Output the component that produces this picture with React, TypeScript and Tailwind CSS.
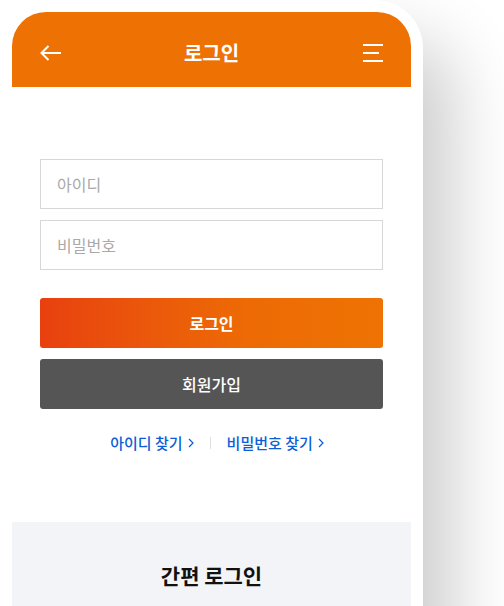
import React from "react";

const font = { fontFamily: '"Noto Sans CJK KR", "Noto Sans", sans-serif' };

function Chevron() {
  return (
    <svg width="6" height="10" viewBox="0 0 6 10" fill="none" className="ml-[5px]">
      <path d="M1 1l4 4-4 4" stroke="currentColor" strokeWidth="1.2" />
    </svg>
  );
}

export default function App() {
  return (
    <div className="h-[606px] bg-white overflow-hidden" style={font}>
      <div className="w-[423px] h-[680px] bg-white rounded-tr-[48px] pt-3 px-3 shadow-[30px_40px_70px_rgba(0,0,0,0.2)]">
        <header className="relative flex h-[75px] items-center justify-between rounded-t-[34px] bg-[#ed7103] px-7 pt-[6px]">
          <svg width="22" height="16" viewBox="0 0 22 16" fill="none">
            <path d="M21 8H1.5M8.5 1L1.5 8l7 7" stroke="white" strokeWidth="2" />
          </svg>
          <h1 className="absolute inset-x-0 top-[6px] bottom-0 flex items-center justify-center text-[20px] font-bold text-white">
            로그인
          </h1>
          <svg width="20" height="18" viewBox="0 0 20 18" fill="none">
            <path d="M0 1h20M0 9h16M0 17h20" stroke="white" strokeWidth="2" />
          </svg>
        </header>

        <div className="flex flex-col px-7 pt-[72px]">
          <input
            placeholder="아이디"
            className="h-[50px] w-full border border-[#d7d7d7] px-4 text-[16px] placeholder:text-[#a9a9a9] outline-none"
          />
          <input
            type="password"
            placeholder="비밀번호"
            className="mt-[11px] h-[50px] w-full border border-[#d7d7d7] px-4 text-[16px] placeholder:text-[#a9a9a9] outline-none"
          />
          <button className="mt-[28px] h-[50px] w-full rounded-[3px] bg-gradient-to-r from-[#e8400f] via-[#ed6a05] via-60% to-[#ee7303] text-[16px] font-bold text-white">
            로그인
          </button>
          <button className="mt-[11px] h-[50px] w-full rounded-[3px] bg-[#555555] text-[16px] font-medium text-white">
            회원가입
          </button>
          <div className="mt-[23px] flex items-center justify-center pl-[11px] text-[15px] font-medium text-[#0b5ed8]">
            <a className="flex items-center">
              아이디 찾기
              <Chevron />
            </a>
            <span className="mx-4 h-3 w-px bg-[#dedede]" />
            <a className="flex items-center">
              비밀번호 찾기
              <Chevron />
            </a>
          </div>
        </div>

        <section className="mt-[67px] bg-[#f3f4f8] pt-[38px] pb-10">
          <h2 className="text-center text-[21px] font-bold text-[#111]">간편 로그인</h2>
        </section>
      </div>
    </div>
  );
}
